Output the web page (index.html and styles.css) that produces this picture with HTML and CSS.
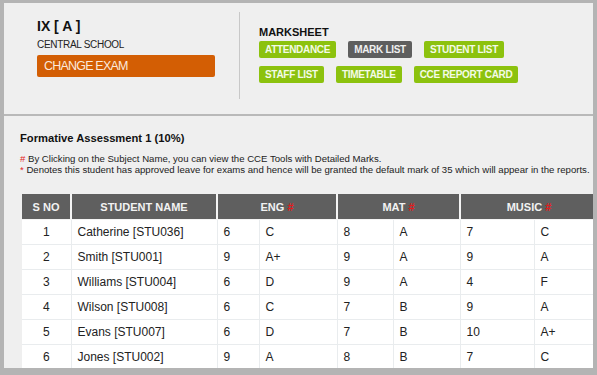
FILE: index.html
```html
<!DOCTYPE html>
<html>
<head>
<meta charset="utf-8">
<link rel="stylesheet" href="styles.css">
</head>
<body>
<div class="frame">
  <header class="top">
    <div class="school">
      <div class="cls">IX [ A ]</div>
      <div class="sname">CENTRAL SCHOOL</div>
      <button class="change">CHANGE EXAM</button>
    </div>
    <div class="divider"></div>
    <div class="menu">
      <div class="menu-title">MARKSHEET</div>
      <div class="btns">
        <span class="btn">ATTENDANCE</span>
        <span class="btn active">MARK LIST</span>
        <span class="btn">STUDENT LIST</span>
      </div>
      <div class="btns">
        <span class="btn">STAFF LIST</span>
        <span class="btn">TIMETABLE</span>
        <span class="btn">CCE REPORT CARD</span>
      </div>
    </div>
  </header>
  <section class="content">
    <h2 class="title">Formative Assessment 1 (10%)</h2>
    <p class="note"><span class="red">#</span> By Clicking on the Subject Name, you can view the CCE Tools with Detailed Marks.<br><span class="red">*</span> Denotes this student has approved leave for exams and hence will be granted the default mark of 35 which will appear in the reports.</p>
    <table class="marks">
      <colgroup>
        <col class="c-sno"><col class="c-name"><col class="c-e1"><col class="c-e2"><col class="c-m1"><col class="c-m2"><col class="c-u1"><col class="c-u2">
      </colgroup>
      <thead>
        <tr><th>S NO</th><th>STUDENT NAME</th><th colspan="2">ENG <span class="red">#</span></th><th colspan="2">MAT <span class="red">#</span></th><th colspan="2">MUSIC <span class="red">#</span></th></tr>
      </thead>
      <tbody>
        <tr><td class="sno">1</td><td>Catherine [STU036]</td><td>6</td><td>C</td><td>8</td><td>A</td><td>7</td><td>C</td></tr>
        <tr><td class="sno">2</td><td>Smith [STU001]</td><td>9</td><td>A+</td><td>9</td><td>A</td><td>9</td><td>A</td></tr>
        <tr><td class="sno">3</td><td>Williams [STU004]</td><td>6</td><td>D</td><td>9</td><td>A</td><td>4</td><td>F</td></tr>
        <tr><td class="sno">4</td><td>Wilson [STU008]</td><td>6</td><td>C</td><td>7</td><td>B</td><td>9</td><td>A</td></tr>
        <tr><td class="sno">5</td><td>Evans [STU007]</td><td>6</td><td>D</td><td>7</td><td>B</td><td>10</td><td>A+</td></tr>
        <tr><td class="sno">6</td><td>Jones [STU002]</td><td>9</td><td>A</td><td>8</td><td>B</td><td>7</td><td>C</td></tr>
      </tbody>
    </table>
  </section>
</div>
</body>
</html>
```
FILE: styles.css
```css
html, body {
  margin: 0;
  padding: 0;
}
body {
  font-family: "Liberation Sans", Arial, sans-serif;
  background: #b4b4b4;
}
.frame {
  width: 597px;
  height: 375px;
  box-sizing: border-box;
  border-style: solid;
  border-color: #b4b4b4;
  border-width: 3px 4px 7px 4px;
  background: #efefef;
  overflow: hidden;
}
.top {
  display: flex;
  align-items: flex-start;
  height: 113px;
  padding-top: 9px;
  box-sizing: border-box;
  border-bottom: 2px solid #b9b9b9;
}
.school {
  width: 202px;
  padding-left: 33px;
  padding-top: 6px;
}
.cls {
  font-size: 14px;
  font-weight: bold;
  color: #111;
  line-height: 16px;
}
.sname {
  font-size: 10px;
  letter-spacing: -0.3px;
  color: #222;
  line-height: 13px;
  margin-top: 4px;
}
.change {
  display: block;
  width: 178px;
  height: 22px;
  margin-top: 4px;
  padding: 0 0 0 7px;
  border: 0;
  border-radius: 2px;
  background: #d35e04;
  color: #fbe9dc;
  font-family: inherit;
  font-size: 12.5px;
  letter-spacing: -0.8px;
  text-align: left;
}
.divider {
  width: 1px;
  height: 87px;
  background: #c8c8c8;
}
.menu {
  padding-left: 19px;
  padding-top: 13px;
}
.menu-title {
  font-size: 11px;
  font-weight: bold;
  color: #111;
  line-height: 14px;
}
.btns {
  display: flex;
  gap: 12px;
  margin-top: 2px;
}
.btns + .btns {
  margin-top: 8px;
}
.btn {
  display: inline-block;
  height: 17px;
  line-height: 17px;
  padding: 0 6px;
  border-radius: 2px;
  background: #8cc20e;
  color: #f4fbe6;
  font-size: 10px;
  letter-spacing: -0.3px;
  font-weight: bold;
}
.btn.active {
  background: #5e5e5e;
  color: #f0f0f0;
}
.content {
  padding: 0 0 0 16px;
}
.title {
  margin: 15px 0 0 0;
  font-size: 11.2px;
  font-weight: bold;
  color: #111;
  line-height: 14px;
}
.note {
  margin: 8px 0 0 0;
  font-size: 9.6px;
  line-height: 11px;
  color: #222;
  white-space: nowrap;
}
.red {
  color: #e31b1b;
}
.marks {
  margin: 19px 0 0 2px;
  border-collapse: collapse;
  table-layout: fixed;
  width: 576px;
  font-size: 12px;
  color: #222;
}
.c-sno { width: 49px; }
.c-name { width: 146px; }
.c-e1 { width: 42px; }
.c-e2 { width: 78px; }
.c-m1 { width: 56px; }
.c-m2 { width: 67px; }
.c-u1 { width: 74px; }
.c-u2 { width: 64px; }
.marks th {
  height: 25px;
  padding: 0;
  background: #5f5f5f;
  color: #f2f2f2;
  font-size: 11px;
  font-weight: bold;
  border-left: 2px solid #f4f4f4;
  border-right: 2px solid #f4f4f4;
  border-bottom: 1px solid #f4f4f4;
}
.marks th:first-child {
  border-left: 0;
}
.marks td {
  height: 24px;
  padding: 0 0 0 6px;
  background: #fff;
  border: 1px solid #e9ecee;
  white-space: nowrap;
}
.marks td:first-child {
  border-left: 0;
}
.marks td.sno {
  text-align: center;
  padding: 0;
}
```
